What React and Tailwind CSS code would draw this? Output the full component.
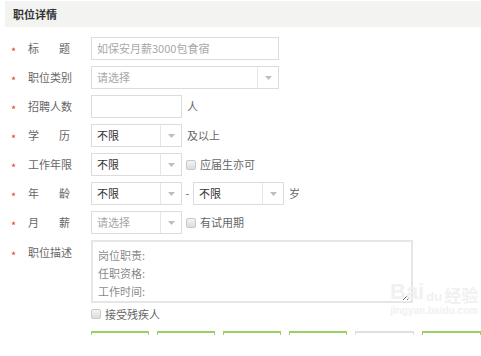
import React from "react";

const Arrow = () => (
  <svg width="7" height="4" viewBox="0 0 7 4"><path d="M0 0h7L3.5 4z" fill="#bdbdbd" /></svg>
);

function Select({ value, placeholder, w, arrowW = 21 }) {
  return (
    <div className="flex h-[23px] border border-[#dcdcdc] bg-white" style={{ width: w }}>
      <div className={"flex-1 flex items-center pl-[5px] " + (value ? "text-[#333]" : "text-[#a8a8a8]")}>
        {value || placeholder}
      </div>
      <div className="flex items-center justify-center border-l border-[#e6e6e6]" style={{ width: arrowW }}>
        <Arrow />
      </div>
    </div>
  );
}

const Check = () => (
  <span className="inline-block w-[10px] h-[10px] rounded-[2px] border border-[#c8c8c8] bg-gradient-to-b from-[#f4f4f4] to-[#dcdcdc]" />
);

function Label({ chars, spread }) {
  return (
    <div className="flex items-center h-[23px] shrink-0">
      <span className="w-[28px] pl-[11px] text-[#e8422e] text-[11px] translate-y-[3px]">*</span>
      <span className={"w-[42px] flex text-[#666] " + (spread ? "justify-between" : "")}>
        {chars.map((c, i) => (
          <span key={i}>{c}</span>
        ))}
      </span>
      <span className="w-[21px]" />
    </div>
  );
}

export default function App() {
  return (
    <div
      className="relative w-[481px] h-[356px] overflow-hidden bg-white text-[11px] leading-none"
      style={{ fontFamily: '"Noto Sans CJK SC", "Noto Sans", sans-serif' }}
    >
      <div className="ml-[5px] mt-[1px] h-[26px] bg-[#f3f4f2] pl-[8px] flex items-center font-bold text-[#333]">
        职位详情
      </div>
      <div className="pt-[10px] flex flex-col gap-[6px]">
        <div className="flex items-center">
          <Label chars={["标", "题"]} spread />
          <div className="w-[188px] h-[23px] border border-[#dcdcdc] flex items-center pl-[5px] text-[#a8a8a8]">
            如保安月薪3000包食宿
          </div>
        </div>
        <div className="flex items-center">
          <Label chars={["职", "位", "类", "别"]} />
          <Select placeholder="请选择" w={188} />
        </div>
        <div className="flex items-center">
          <Label chars={["招", "聘", "人", "数"]} />
          <div className="w-[91px] h-[23px] border border-[#dcdcdc]" />
          <span className="ml-[5px] text-[#666]">人</span>
        </div>
        <div className="flex items-center">
          <Label chars={["学", "历"]} spread />
          <Select value="不限" w={91} />
          <span className="ml-[5px] text-[#666]">及以上</span>
        </div>
        <div className="flex items-center">
          <Label chars={["工", "作", "年", "限"]} />
          <Select value="不限" w={91} />
          <span className="ml-[4px] flex items-center gap-[4px] text-[#666]">
            <Check />
            应届生亦可
          </span>
        </div>
        <div className="flex items-center">
          <Label chars={["年", "龄"]} spread />
          <Select value="不限" w={91} />
          <span className="w-[11px] text-center text-[#666]">-</span>
          <Select value="不限" w={91} />
          <span className="ml-[5px] text-[#666]">岁</span>
        </div>
        <div className="flex items-center">
          <Label chars={["月", "薪"]} spread />
          <Select placeholder="请选择" w={91} />
          <span className="ml-[4px] flex items-center gap-[4px] text-[#666]">
            <Check />
            有试用期
          </span>
        </div>
        <div className="flex items-start">
          <div className="pt-[1px]">
            <Label chars={["职", "位", "描", "述"]} />
          </div>
          <textarea
            readOnly
            className="w-[322px] h-[63px] border-2 border-[#e6e6e6] pl-[5px] pt-[4px] text-[11px] leading-[18px] outline-none"
            placeholder={"岗位职责:\n任职资格:\n工作时间:"}
            style={{ fontFamily: '"Noto Sans CJK SC", sans-serif' }}
          />
        </div>
      </div>
      <div className="ml-[91px] mt-[5px] flex items-center gap-[4px] text-[#666] h-[12px]">
        <Check />
        接受残疾人
      </div>
      <div className="ml-[91px] mt-[11px] flex gap-[8px]">
        <div className="w-[59px] h-[4px] border-t-2 border-x border-[#9bd064]" />
        <div className="w-[59px] h-[4px] border-t-2 border-x border-[#9bd064]" />
        <div className="w-[59px] h-[4px] border-t-2 border-x border-[#9bd064]" />
        <div className="w-[60px] h-[4px] border-t-2 border-x border-[#9bd064]" />
        <div className="w-[60px] h-[4px] border-t-2 border-x border-[#e0e0e0]" />
        <div className="w-[60px] h-[4px] border-t-2 border-x border-[#9bd064]" />
      </div>
      <div className="absolute left-[390px] top-[281px] flex flex-col items-center text-[#f1f1f1] pointer-events-none">
        <div className="flex items-end font-bold text-[22px] leading-none" style={{ fontFamily: '"Liberation Sans", sans-serif' }}>
          <span>Bai</span>
          <span className="text-[13px] mx-[2px]">du</span>
          <span className="text-[17px]" style={{ fontFamily: '"Noto Sans CJK SC", sans-serif' }}>经验</span>
        </div>
        <div className="text-[10px] font-bold mt-[3px]" style={{ fontFamily: '"Liberation Sans", sans-serif' }}>jingyan.baidu.com</div>
      </div>
    </div>
  );
}
